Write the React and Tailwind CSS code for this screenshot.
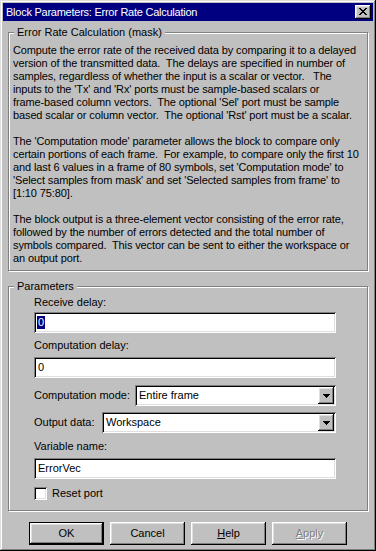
import React from "react";

const raised =
  "shadow-[inset_-1px_-1px_0_#000,inset_1px_1px_0_#fff,inset_-2px_-2px_0_#808080,inset_2px_2px_0_#dfdfdf]";
const sunken =
  "shadow-[inset_1px_1px_0_#808080,inset_-1px_-1px_0_#fff,inset_2px_2px_0_#000,inset_-2px_-2px_0_#dfdfdf]";
const etched =
  "border border-[#808080] shadow-[inset_1px_1px_0_#fff,1px_1px_0_#fff]";

function CloseGlyph() {
  const rows = [
    [[0, 2], [6, 2]],
    [[1, 2], [5, 2]],
    [[2, 4]],
    [[3, 2]],
    [[2, 4]],
    [[1, 2], [5, 2]],
    [[0, 2], [6, 2]],
  ];
  return (
    <svg width="8" height="7" viewBox="0 0 8 7" shapeRendering="crispEdges">
      {rows.map((r, y) =>
        r.map(([x, w], i) => (
          <rect key={y + "-" + i} x={x} y={y} width={w} height={1} fill="#000" />
        ))
      )}
    </svg>
  );
}

function Arrow() {
  return (
    <svg width="7" height="4" viewBox="0 0 7 4" shapeRendering="crispEdges">
      <rect x="0" y="0" width="7" height="1" fill="#000" />
      <rect x="1" y="1" width="5" height="1" fill="#000" />
      <rect x="2" y="2" width="3" height="1" fill="#000" />
      <rect x="3" y="3" width="1" height="1" fill="#000" />
    </svg>
  );
}

function TextBox({ children }) {
  return (
    <div
      className={`w-[302px] h-[21px] bg-white ${sunken} flex items-center pl-[3px] leading-[13px]`}
    >
      {children}
    </div>
  );
}

function Combo({ width, value }) {
  return (
    <div
      className={`${width} h-[21px] bg-white ${sunken} flex items-center justify-between pl-[4px] pr-[2px]`}
    >
      <span className="leading-[13px]">{value}</span>
      <div
        className={`w-[16px] h-[17px] bg-[#c0c0c0] ${raised} flex items-center justify-center`}
      >
        <Arrow />
      </div>
    </div>
  );
}

function Button({ children, def, disabled }) {
  return (
    <div
      className={`w-[75px] h-[23px] bg-[#c0c0c0] flex items-center justify-center ${
        def ? "border border-black" : ""
      }`}
    >
      <div
        className={`w-full h-full flex items-center justify-center ${raised} ${
          disabled ? "text-[#808080] [text-shadow:1px_1px_0_#fff]" : ""
        }`}
      >
        {children}
      </div>
    </div>
  );
}

const desc = [
  "Compute the error rate of the received data by comparing it to a delayed",
  "version of the transmitted data.  The delays are specified in number of",
  "samples, regardless of whether the input is a scalar or vector.   The",
  "inputs to the 'Tx' and 'Rx' ports must be sample-based scalars or",
  "frame-based column vectors.  The optional 'Sel' port must be sample",
  "based scalar or column vector.  The optional 'Rst' port must be a scalar.",
  "",
  "The 'Computation mode' parameter allows the block to compare only",
  "certain portions of each frame.  For example, to compare only the first 10",
  "and last 6 values in a frame of 80 symbols, set 'Computation mode' to",
  "'Select samples from mask' and set 'Selected samples from frame' to",
  "[1:10 75:80].",
  "",
  "The block output is a three-element vector consisting of the error rate,",
  "followed by the number of errors detected and the total number of",
  "symbols compared.  This vector can be sent to either the workspace or",
  "an output port.",
];

export default function App() {
  return (
    <div
      className="w-[376px] h-[551px] bg-[#c0c0c0] p-[3px] flex flex-col text-black text-[11px] shadow-[inset_-1px_-1px_0_#000,inset_1px_1px_0_#dfdfdf,inset_-2px_-2px_0_#808080,inset_2px_2px_0_#fff]"
      style={{ fontFamily: '"Liberation Sans", Arial, sans-serif' }}
    >
      {/* Title bar */}
      <div className="h-[18px] bg-[#000080] flex items-center justify-between pl-[3px] pr-[2px]">
        <span className="text-white text-[11px] leading-[13px] tracking-[-0.25px]">
          Block Parameters: Error Rate Calculation
        </span>
        <div
          className={`w-[16px] h-[14px] bg-[#c0c0c0] ${raised} flex items-center justify-center pb-[1px]`}
        >
          <CloseGlyph />
        </div>
      </div>

      {/* Group 1 */}
      <div className={`relative mx-[5px] mt-[11px] h-[239px] ${etched} pl-[4px] pt-[11px]`}>
        <span className="absolute left-[5px] top-[-7px] px-[3px] bg-[#c0c0c0] leading-[13px] whitespace-pre">
          Error Rate Calculation (mask)
        </span>
        {desc.map((l, i) => (
          <div key={i} className="h-[13px] leading-[13px] whitespace-pre tracking-[-0.12px]">
            {l}
          </div>
        ))}
      </div>

      {/* Group 2 */}
      <div className={`relative mx-[5px] mt-[15px] h-[225px] ${etched} pl-[25px] flex flex-col`}>
        <span className="absolute left-[5px] top-[-7px] px-[3px] bg-[#c0c0c0] leading-[13px]">
          Parameters
        </span>
        <div className="mt-[9px] leading-[13px]">Receive delay:</div>
        <div className="mt-[3px]">
          <TextBox>
            <span className="bg-[#000080] text-white px-[1px]">0</span>
          </TextBox>
        </div>
        <div className="mt-[6px] leading-[13px]">Computation delay:</div>
        <div className="mt-[5px]">
          <TextBox>
            <span className="px-[1px]">0</span>
          </TextBox>
        </div>
        <div className="mt-[7px] flex items-center">
          <span className="w-[101px] leading-[13px]">Computation mode:</span>
          <Combo width="w-[201px]" value="Entire frame" />
        </div>
        <div className="mt-[6px] flex items-center">
          <span className="w-[68px] leading-[13px]">Output data:</span>
          <Combo width="w-[234px]" value="Workspace" />
        </div>
        <div className="mt-[7px] leading-[13px]">Variable name:</div>
        <div className="mt-[5px]">
          <TextBox>
            <span className="px-[1px]">ErrorVec</span>
          </TextBox>
        </div>
        <div className="mt-[8px] flex items-center">
          <div className={`w-[13px] h-[13px] bg-white ${sunken}`} />
          <span className="ml-[5px] leading-[13px]">Reset port</span>
        </div>
      </div>

      {/* Buttons */}
      <div className="mt-[11px] pl-[26px] flex gap-[6px]">
        <Button def>OK</Button>
        <Button>Cancel</Button>
        <Button>
          <span>
            <span className="underline">H</span>elp
          </span>
        </Button>
        <Button disabled>
          <span>
            <span className="underline">A</span>pply
          </span>
        </Button>
      </div>
    </div>
  );
}
